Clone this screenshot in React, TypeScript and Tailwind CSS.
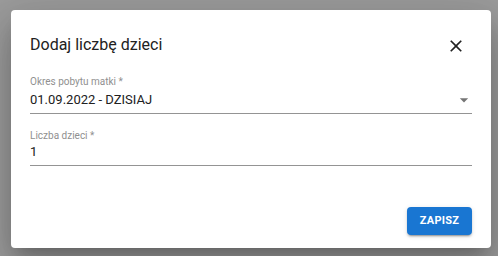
import React from 'react';

function CloseIcon() {
  return (
    <svg viewBox="0 0 24 24" className="w-5 h-5 fill-[#212121]">
      <path d="M19 6.41 17.59 5 12 10.59 6.41 5 5 6.41 10.59 12 5 17.59 6.41 19 12 13.41 17.59 19 19 17.59 13.41 12z" />
    </svg>
  );
}

function DropIcon() {
  return (
    <svg viewBox="0 0 24 24" className="w-5 h-5 fill-[#757575]">
      <path d="M7 10l5 5 5-5z" />
    </svg>
  );
}

export default function App() {
  return (
    <div
      className="w-[498px] h-[256px] bg-[#9c9c9c] pt-[10px] pl-[11px] overflow-hidden"
      style={{ fontFamily: 'Roboto, "Liberation Sans", sans-serif' }}
    >
      <div className="w-[480px] h-[238px] bg-white rounded flex flex-col shadow-[0px_11px_15px_-7px_rgba(0,0,0,0.2),0px_24px_38px_3px_rgba(0,0,0,0.14),0px_9px_46px_8px_rgba(0,0,0,0.12)]">
        <div className="flex items-center justify-between pt-[23px] pl-[19px] pr-[25px]">
          <h2 className="text-[16px] leading-[24px] text-[#212121]">Dodaj liczbę dzieci</h2>
          <button className="mt-[2px]">
            <CloseIcon />
          </button>
        </div>

        <div className="px-[19px] mt-[19px]">
          <label className="block text-[10px] leading-[12px] text-[#909090]">Okres pobytu matki *</label>
          <div className="mt-[4px] flex items-start justify-between h-[22px] border-b border-[#949494] text-[13px] text-[#212121]">
            <span className="leading-[16px]">01.09.2022 - DZISIAJ</span>
            <span className="-mr-[2px] -mt-[2px]">
              <DropIcon />
            </span>
          </div>
        </div>

        <div className="px-[19px] mt-[16px]">
          <label className="block text-[10px] leading-[12px] text-[#909090]">Liczba dzieci *</label>
          <div className="mt-[2px] h-[22px] border-b border-[#949494] text-[13px] leading-[16px] text-[#212121]">1</div>
        </div>

        <div className="flex-1" />

        <div className="flex justify-end px-[19px] pb-[13px]">
          <button className="w-[65px] h-[28px] rounded bg-[#1976d2] text-white text-[11px] font-bold tracking-[0.3px] shadow-[0px_3px_1px_-2px_rgba(0,0,0,0.2),0px_2px_2px_0px_rgba(0,0,0,0.14),0px_1px_5px_0px_rgba(0,0,0,0.12)]">
            ZAPISZ
          </button>
        </div>
      </div>
    </div>
  );
}
